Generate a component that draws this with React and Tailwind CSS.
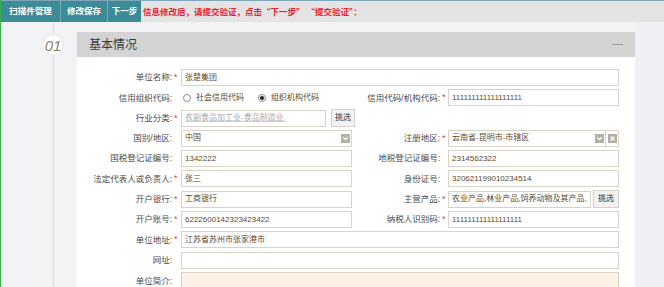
import React from "react";

function Req({ on }) {
  return (
    <div className="pl-[2px] text-[9px] leading-none text-[#e2383c] self-center">{on ? "*" : ""}</div>
  );
}

function Lbl({ children, req }) {
  return (
    <>
      <div className="text-right text-[8.5px] leading-none text-[#4a4a4a] whitespace-nowrap self-center">{children}</div>
      <Req on={req} />
    </>
  );
}

function Inp({ value, placeholder, span, right }) {
  return (
    <div
      className={
        "h-[17px] border border-[#d7d3c7] bg-white pl-[3px] flex items-center text-[8px] leading-none whitespace-nowrap overflow-hidden " +
        (span ? "col-span-4 " : "") +
        (placeholder ? "text-[#a9a9a9] " : "text-[#5a4a30] ")
      }
    >
      <span className="flex-1">{value || placeholder}</span>
      {right}
    </div>
  );
}

function DropIcon() {
  return (
    <div className="w-[9px] h-[9px] mr-[1px] bg-[#b3b0a3] flex items-center justify-center shrink-0">
      <svg width="7" height="7" viewBox="0 0 7 7">
        <path d="M1.2 2.3 L3.5 4.6 L5.8 2.3" fill="none" stroke="#fff" strokeWidth="1.3" />
      </svg>
    </div>
  );
}

function PickBtn({ w }) {
  return (
    <div className={"h-[18px] border border-[#d2d2d2] bg-[#f3f3f3] flex items-center justify-center text-[8px] leading-none text-[#333] " + w}>
      挑选
    </div>
  );
}

function Radio({ checked, label }) {
  return (
    <div className="flex items-center">
      <div className="w-[8px] h-[8px] rounded-full border border-[#8a8a8a] bg-white flex items-center justify-center">
        {checked ? <div className="w-[4px] h-[4px] rounded-full bg-[#222]" /> : null}
      </div>
      <span className="ml-[5px] text-[8px] leading-none text-[#5a4a30]">{label}</span>
    </div>
  );
}

export default function App() {
  return (
    <div className="w-[664px] h-[287px] overflow-hidden bg-[#f2f3f5] border-l border-[#2fb24a] flex flex-col font-['Liberation_Sans','Noto_Sans_CJK_SC',sans-serif]">
      {/* top bar */}
      <div className="h-[22px] shrink-0 flex items-stretch bg-[#e4e4e4] border-t border-[#7ea7ba]">
        <div className="w-[59px] bg-[#3c8c98] flex items-center justify-center text-white text-[8.5px] font-bold leading-none">扫描件管理</div>
        <div className="w-px bg-[#74adb6]" />
        <div className="w-[46px] bg-[#3c8c98] flex items-center justify-center text-white text-[8.5px] font-bold leading-none">修改保存</div>
        <div className="w-px bg-[#74adb6]" />
        <div className="w-[33px] bg-[#3c8c98] flex items-center justify-center text-white text-[8.5px] font-bold leading-none">下一步</div>
        <div className="pl-[2px] flex items-center text-[8.5px] font-bold leading-none text-[#e8232b] whitespace-nowrap font-['Noto_Sans_CJK_SC',sans-serif]">
          信息修改后，请提交验证，点击“下一步” “提交验证”：
        </div>
      </div>

      <div className="flex-1 flex min-h-0">
        {/* timeline column */}
        <div className="w-[76px] shrink-0 pl-[41px]">
          <div className="w-[22px] h-full flex flex-col items-center">
            <div className="w-px h-[12px] bg-[#dcdcdc]" />
            <div className="w-[22px] h-[22px] rounded-full bg-white border border-[#e6e6e6] flex items-center justify-center text-[15px] italic leading-none text-[#8b8165]">
              01
            </div>
            <div className="w-px flex-1 bg-[#dcdcdc]" />
          </div>
        </div>

        {/* panel */}
        <div className="w-[558px] shrink-0 mt-[10px] flex flex-col bg-white">
          <div className="h-[25px] shrink-0 bg-[#d4d4d4] flex items-center justify-between pl-[12px] pr-[12px]">
            <span className="text-[12px] leading-none text-[#3a3a3a]">基本情况</span>
            <div className="w-[11px] h-px bg-[#9a9a9a]" />
          </div>
          <div className="pt-[12px] grid grid-cols-[95px_9px_171px_88px_8px_171px] auto-rows-[17px] gap-y-[3.3px]">
            <Lbl req>单位名称:</Lbl>
            <Inp span value="张楚集团" />

            <Lbl>信用组织代码:</Lbl>
            <div className="flex items-center gap-[14px] pl-[2px]">
              <Radio label="社会信用代码" />
              <Radio checked label="组织机构代码" />
            </div>
            <Lbl req>信用代码/机构代码:</Lbl>
            <Inp value="111111111111111111" />

            <Lbl req>行业分类:</Lbl>
            <div className="flex items-center col-span-4">
              <div className="w-[145px] h-[17px] border border-[#d7d3c7] bg-white pl-[3px] flex items-center text-[8px] leading-none text-[#a9a9a9] underline decoration-[#cfcfcf]">
                农副食品加工业-食品制造业.
              </div>
              <div className="ml-[5px]">
                <PickBtn w="w-[24px]" />
              </div>
            </div>

            <Lbl>国别/地区:</Lbl>
            <Inp value="中国" right={<DropIcon />} />
            <Lbl req>注册地区:</Lbl>
            <div className="flex items-center">
              <div className="w-[158px] h-[17px] border border-[#d7d3c7] bg-white pl-[3px] flex items-center text-[8px] leading-none text-[#5a4a30]">
                <span className="flex-1">云南省-昆明市-市辖区</span>
                <DropIcon />
              </div>
              <div className="w-[13px] h-[17px] border border-l-0 border-[#d7d3c7] bg-white flex items-center justify-center">
                <div className="w-[9px] h-[9px] bg-[#b3b0a3] flex items-center justify-center">
                  <svg width="7" height="7" viewBox="0 0 7 7">
                    <path d="M1.5 1.5 L5.5 5.5 M5.5 1.5 L1.5 5.5" stroke="#fff" strokeWidth="1.2" />
                  </svg>
                </div>
              </div>
            </div>

            <Lbl>国税登记证编号:</Lbl>
            <Inp value="1342222" />
            <Lbl>地税登记证编号:</Lbl>
            <Inp value="2314562322" />

            <Lbl req>法定代表人或负责人:</Lbl>
            <Inp value="张三" />
            <Lbl>身份证号:</Lbl>
            <Inp value="320621199010234514" />

            <Lbl req>开户银行:</Lbl>
            <Inp value="工商银行" />
            <Lbl req>主营产品:</Lbl>
            <div className="flex items-center">
              <div className="w-[143px] h-[17px] border border-[#d7d3c7] bg-white pl-[3px] flex items-center text-[8px] leading-none text-[#5a4a30] whitespace-nowrap overflow-hidden">
                农业产品,林业产品,饲养动物及其产品,
              </div>
              <div className="ml-[2px]">
                <PickBtn w="w-[26px]" />
              </div>
            </div>

            <Lbl req>开户账号:</Lbl>
            <Inp value="6222600142323423422" />
            <Lbl req>纳税人识别码:</Lbl>
            <Inp value="111111111111111111" />

            <Lbl req>单位地址:</Lbl>
            <Inp span value="江苏省苏州市张家港市" />

            <Lbl>网址:</Lbl>
            <Inp span value="" />

            <div className="text-right text-[8.5px] leading-none text-[#4a4a4a] pt-[5px] row-span-2">单位简介:</div>
            <div className="row-span-2" />
            <div className="col-span-4 row-span-2 border border-[#d7d3c7] bg-[#fdf1e5]" />
          </div>
        </div>

        <div className="flex-1 bg-[#eef0f4]" />
      </div>
    </div>
  );
}
